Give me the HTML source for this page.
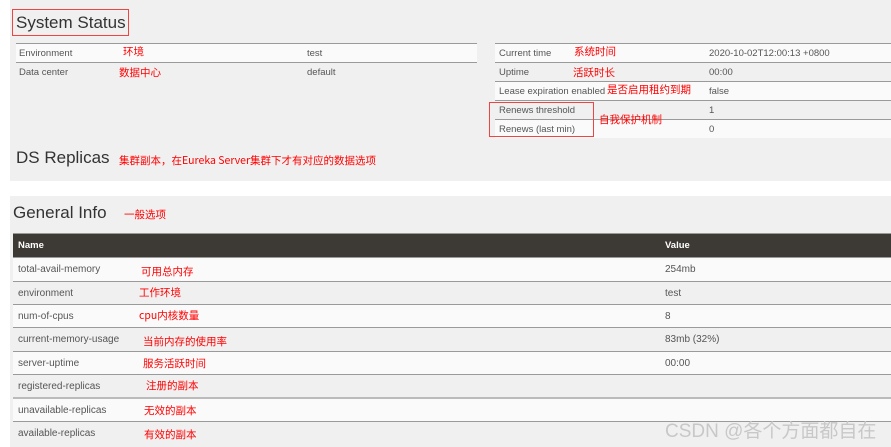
<!DOCTYPE html>
<html><head><meta charset="utf-8"><style>
*{margin:0;padding:0;box-sizing:border-box}
body{width:891px;height:447px;background:#fff;position:relative;overflow:hidden;font-family:"Liberation Sans","Noto Sans CJK SC",sans-serif;color:#444}
.a{position:absolute;white-space:nowrap}
.p{position:absolute;background:#f0f0f0}
.r{position:absolute;border-top:1px solid #9a9a9a;font-size:9.5px;color:#555}
.r span{position:absolute;top:4px}
.cn{position:absolute;color:#f00;font-size:10.5px;font-family:"Noto Sans CJK SC",sans-serif;white-space:nowrap}
.h{font-size:17px;color:#333}
.g{position:absolute;left:13px;width:878px;border-top:1px solid #9a9a9a;font-size:10px;color:#555}
.g span{position:absolute;top:6px}
</style></head><body>
<div class="p" style="left:10px;top:0;width:881px;height:181px"></div>
<div class="p" style="left:10px;top:196px;width:881px;height:251px"></div>
<div class="a" style="left:12px;top:9px;width:117px;height:27px;border:1.5px solid #e44"></div>
<div class="a h" style="left:16px;top:13px">System Status</div>
<div class="r" style="left:16px;top:43px;width:461px;height:19px;background:#fafafa"><span style="left:3px">Environment</span><span style="left:291px">test</span></div>
<div class="r" style="left:16px;top:62px;width:461px;height:19px"><span style="left:3px">Data center</span><span style="left:291px">default</span></div>
<div class="cn" style="left:123px;top:44px">环境</div>
<div class="cn" style="left:119px;top:65px">数据中心</div>
<div class="r" style="left:495px;top:43px;width:396px;height:19px;background:#fafafa"><span style="left:4px">Current time</span><span style="left:214px">2020-10-02T12:00:13 +0800</span></div>
<div class="r" style="left:495px;top:62px;width:396px;height:19px"><span style="left:4px">Uptime</span><span style="left:214px">00:00</span></div>
<div class="r" style="left:495px;top:81px;width:396px;height:19px;background:#fafafa"><span style="left:4px">Lease expiration enabled</span><span style="left:214px">false</span></div>
<div class="r" style="left:495px;top:100px;width:396px;height:19px"><span style="left:4px">Renews threshold</span><span style="left:214px">1</span></div>
<div class="r" style="left:495px;top:119px;width:396px;height:19px;background:#fafafa"><span style="left:4px">Renews (last min)</span><span style="left:214px">0</span></div>
<div class="cn" style="left:574px;top:44px">系统时间</div>
<div class="cn" style="left:573px;top:65px">活跃时长</div>
<div class="cn" style="left:607px;top:82px">是否启用租约到期</div>
<div class="cn" style="left:599px;top:112px">自我保护机制</div>
<div class="a" style="left:489px;top:102px;width:105px;height:35px;border:1.5px solid #e44"></div>
<div class="a h" style="left:16px;top:148px">DS Replicas</div>
<div class="cn" style="left:119px;top:153px">集群副本，在Eureka Server集群下才有对应的数据选项</div>
<div class="a h" style="left:13px;top:203px">General Info</div>
<div class="cn" style="left:124px;top:207px">一般选项</div>
<div class="a" style="left:13px;top:233px;width:878px;height:24px;background:#3d3934;border-top:1px solid #999;color:#fff;font-size:9.5px;font-weight:bold"><span class="a" style="left:5px;top:6px">Name</span><span class="a" style="left:652px;top:6px">Value</span></div>
<div class="g" style="top:257px;height:24px;background:#fafafa"><span style="left:5px">total-avail-memory</span><span style="left:652px">254mb</span></div>
<div class="g" style="top:281px;height:23px"><span style="left:5px">environment</span><span style="left:652px">test</span></div>
<div class="g" style="top:304px;height:23px;background:#fafafa"><span style="left:5px">num-of-cpus</span><span style="left:652px">8</span></div>
<div class="g" style="top:327px;height:24px"><span style="left:5px">current-memory-usage</span><span style="left:652px">83mb (32%)</span></div>
<div class="g" style="top:351px;height:23px;background:#fafafa"><span style="left:5px">server-uptime</span><span style="left:652px">00:00</span></div>
<div class="g" style="top:374px;height:23px"><span style="left:5px">registered-replicas</span></div>
<div class="g" style="top:397px;height:24px;background:#fafafa;border-top:2px solid #bbb"><span style="left:5px">unavailable-replicas</span></div>
<div class="g" style="top:421px;height:26px"><span style="left:5px">available-replicas</span></div>
<div class="cn" style="left:141px;top:264px">可用总内存</div>
<div class="cn" style="left:139px;top:285px">工作环境</div>
<div class="cn" style="left:139px;top:308px">cpu内核数量</div>
<div class="cn" style="left:143px;top:334px">当前内存的使用率</div>
<div class="cn" style="left:143px;top:356px">服务活跃时间</div>
<div class="cn" style="left:146px;top:378px">注册的副本</div>
<div class="cn" style="left:144px;top:403px">无效的副本</div>
<div class="cn" style="left:144px;top:427px">有效的副本</div>
<div class="a" style="left:665px;top:416px;font-size:19px;color:#c8c8c8;font-family:'Liberation Sans','Noto Sans CJK SC',sans-serif">CSDN @各个方面都自在</div>
</body></html>
